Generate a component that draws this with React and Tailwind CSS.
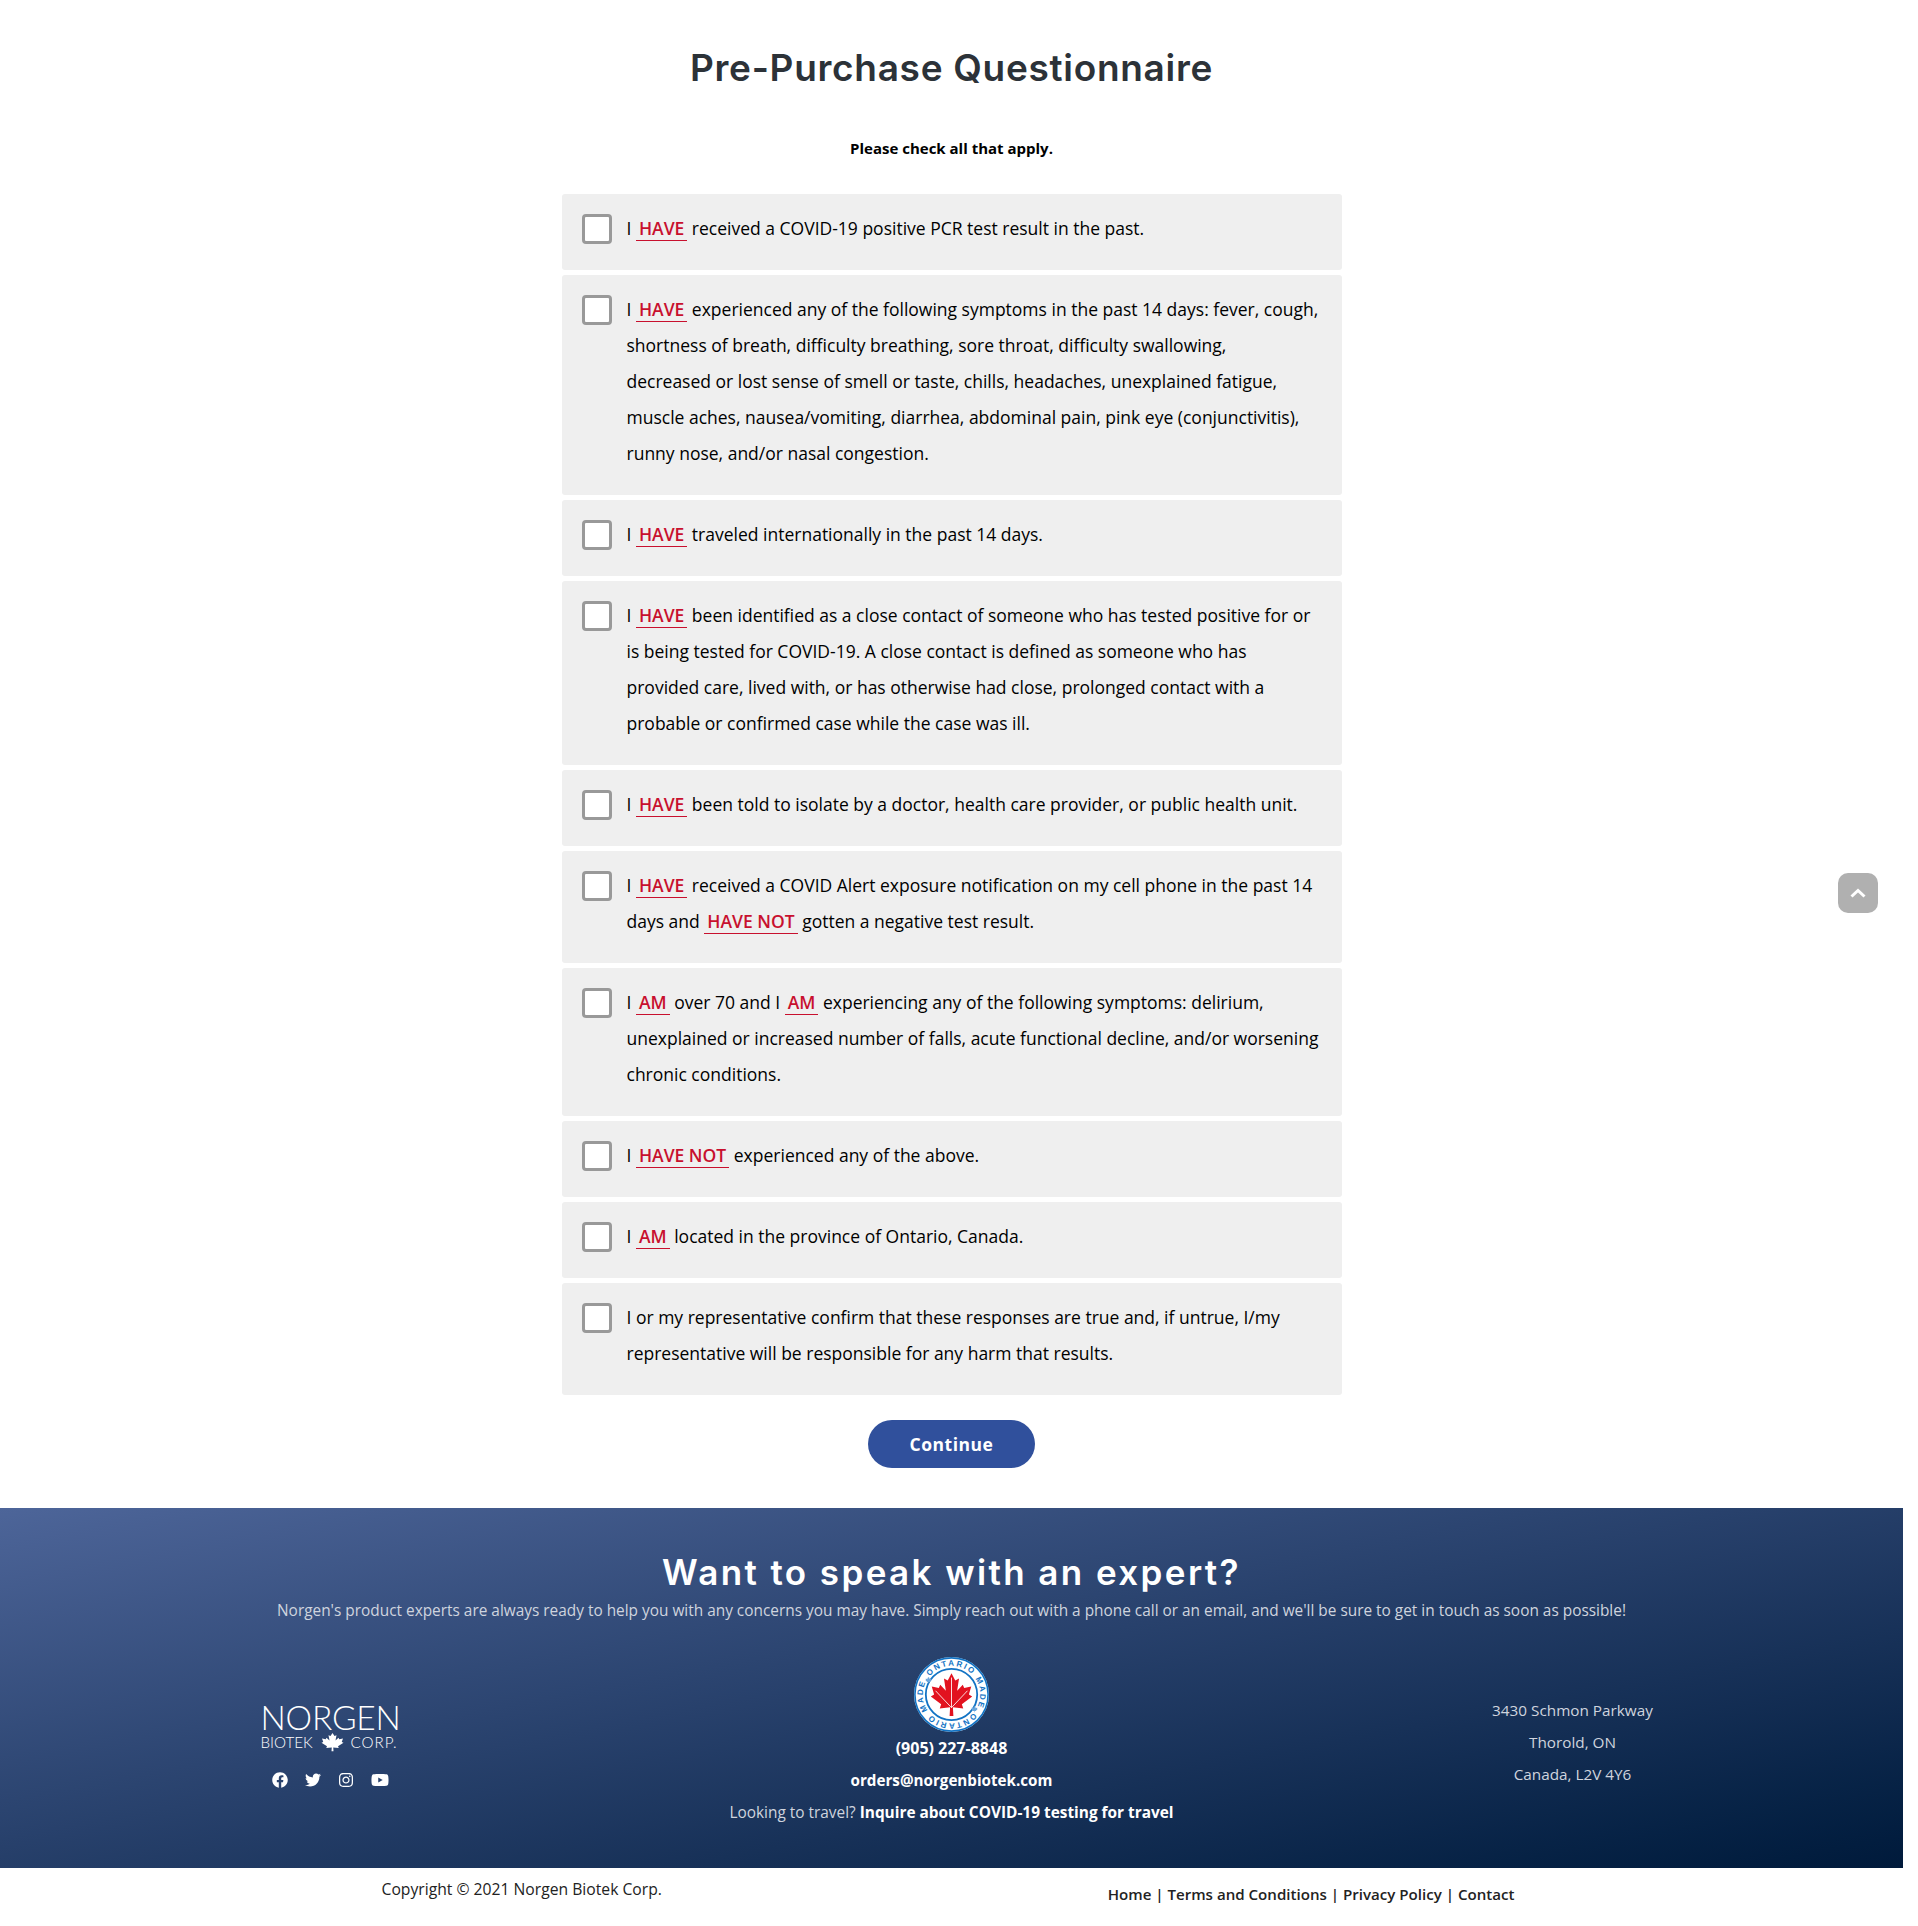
import { FaFacebook, FaTwitter, FaInstagram, FaYoutube } from 'react-icons/fa';

const leafPoints =
  '50,5 58,20 66,16 62,42 74,29 77,36 92,33 87,50 94,54 72,71 75,80 53,77 54,96 46,96 47,77 25,80 28,71 6,54 13,50 8,33 23,36 26,29 38,42 34,16 42,20';

function Key({ children }) {
  return (
    <span className="inline-block border-b border-[#c8102e] px-[3px] leading-[24px] font-semibold text-[#c8102e]">
      {children}
    </span>
  );
}

const questions = [
  [<>I <Key>HAVE</Key> received a COVID-19 positive PCR test result in the past.</>],
  [
    <>I <Key>HAVE</Key> experienced any of the following symptoms in the past 14 days: fever, cough,</>,
    'shortness of breath, difficulty breathing, sore throat, difficulty swallowing,',
    'decreased or lost sense of smell or taste, chills, headaches, unexplained fatigue,',
    'muscle aches, nausea/vomiting, diarrhea, abdominal pain, pink eye (conjunctivitis),',
    'runny nose, and/or nasal congestion.',
  ],
  [<>I <Key>HAVE</Key> traveled internationally in the past 14 days.</>],
  [
    <>I <Key>HAVE</Key> been identified as a close contact of someone who has tested positive for or</>,
    'is being tested for COVID-19. A close contact is defined as someone who has',
    'provided care, lived with, or has otherwise had close, prolonged contact with a',
    'probable or confirmed case while the case was ill.',
  ],
  [<>I <Key>HAVE</Key> been told to isolate by a doctor, health care provider, or public health unit.</>],
  [
    <>I <Key>HAVE</Key> received a COVID Alert exposure notification on my cell phone in the past 14</>,
    <>days and <Key>HAVE NOT</Key> gotten a negative test result.</>,
  ],
  [
    <>I <Key>AM</Key> over 70 and I <Key>AM</Key> experiencing any of the following symptoms: delirium,</>,
    'unexplained or increased number of falls, acute functional decline, and/or worsening',
    'chronic conditions.',
  ],
  [<>I <Key>HAVE NOT</Key> experienced any of the above.</>],
  [<>I <Key>AM</Key> located in the province of Ontario, Canada.</>],
  [
    'I or my representative confirm that these responses are true and, if untrue, I/my',
    'representative will be responsible for any harm that results.',
  ],
];

function MapleLeaf({ className }) {
  return (
    <svg viewBox="0 0 100 100" className={className} fill="currentColor" preserveAspectRatio="none">
      <polygon points={leafPoints} />
    </svg>
  );
}

function RingText() {
  return (
    <text fontFamily="Liberation Sans, sans-serif" fontSize="8" fontWeight="700" fill="#1273c4">
      <textPath href="#badgeRing" textLength="82" lengthAdjust="spacing">ONTARIO MADE</textPath>
    </text>
  );
}

function OntarioBadge() {
  return (
    <svg viewBox="0 0 75 75" className="h-[75px] w-[75px]">
      <defs>
        <path id="badgeRing" d="M15.67 19.18 A28.5 28.5 0 1 1 59.33 55.82 A28.5 28.5 0 1 1 15.67 19.18" />
      </defs>
      <circle cx="37.5" cy="37.5" r="37.5" fill="#fff" />
      <circle cx="37.5" cy="37.5" r="36.6" fill="none" stroke="#1273c4" strokeWidth="1.6" />
      <circle cx="37.5" cy="37.5" r="25.7" fill="none" stroke="#1273c4" strokeWidth="1.8" />
      <RingText />
      <g transform="rotate(180 37.5 37.5)">
        <RingText />
      </g>
      <g transform="translate(57 48.5) scale(0.07)" fill="#6aa6dc">
        <polygon points={leafPoints} />
      </g>
      <g transform="translate(11 19.5) scale(0.07)" fill="#6aa6dc">
        <polygon points={leafPoints} />
      </g>
      <g transform="translate(14 14) scale(0.47)">
        <polygon points={leafPoints} fill="#e2121f" />
        <path d="M50 78V14M50 78 16 42M50 78 84 42" stroke="#fff" strokeWidth="1.8" fill="none" />
      </g>
    </svg>
  );
}

export default function App() {
  return (
    <div className='relative w-[1903px] bg-white font-["Open_Sans",sans-serif]'>
      <main className="flex flex-col items-center">
        <h1 className='mt-[44px] font-["Inter",sans-serif] text-[37px] leading-[48px] font-semibold tracking-[0.7px] text-[#2c3238]'>
          Pre-Purchase Questionnaire
        </h1>
        <p className="mt-[44px] text-[15px] leading-[24px] font-bold text-black">Please check all that apply.</p>
        <div className="mt-[34px] flex w-[780px] flex-col gap-[5px]">
          {questions.map((lines, i) => (
            <label key={i} className="flex gap-[15px] rounded-[3px] bg-[#efefef] px-[20px] pt-[20px] pb-[24px]">
              <span className="h-[30px] w-[30px] shrink-0 rounded-[4px] border-[3px] border-[#999] bg-white" />
              <span className="-mt-[4px] text-[17.5px] leading-[36px] text-black">
                {lines.map((line, j) => (
                  <span key={j} className="block whitespace-nowrap">{line}</span>
                ))}
              </span>
            </label>
          ))}
        </div>
        <button className="mt-[25px] mb-[40px] h-[48px] w-[167px] rounded-full bg-[#30509c] text-[17.5px] font-bold tracking-[0.5px] text-white">
          Continue
        </button>
      </main>

      <footer className="h-[360px] bg-linear-to-br from-[#4d6599] to-[#001a3b] pt-[42px] text-center">
        <h2 className='font-["Inter",sans-serif] text-[35px] leading-[44px] font-semibold tracking-[2.4px] text-white'>
          Want to speak with an expert?
        </h2>
        <p className="mt-[4px] text-[15.4px] leading-[26px] text-[#cfd4de]">
          Norgen's product experts are always ready to help you with any concerns you may have. Simply reach out with a phone call or an email, and we'll be sure to get in touch as soon as possible!
        </p>
        <div className="mt-[32px] grid grid-cols-3 px-[20px]">
          <div className="flex flex-col items-center pt-[45px]">
            <div className='mr-[3px] w-[137px] font-["Lato",sans-serif] font-light text-white'>
              <div className="text-[33.5px] leading-[32px] tracking-[-0.2px]">NORGEN</div>
              <div className="-mt-[1px] flex items-center justify-between text-[15.2px] leading-[18px]">
                <span>BIOTEK</span>
                <MapleLeaf className="ml-[2px] h-[20px] w-[25px]" />
                <span className="tracking-[1px]">CORP.</span>
              </div>
            </div>
            <div className="mt-[19px] flex items-center gap-[17px] text-[16px] text-white">
              <FaFacebook />
              <FaTwitter />
              <FaInstagram />
              <FaYoutube className="text-[18px]" />
            </div>
          </div>
          <div className="flex flex-col items-center pt-[1px]">
            <OntarioBadge />
            <div className="text-[16px] leading-[32px] font-bold text-white">(905) 227-8848</div>
            <div className="text-[15.2px] leading-[32px] font-bold text-white">orders@norgenbiotek.com</div>
            <div className="text-[15.4px] leading-[34px] text-[#cfd4de]">
              Looking to travel? <span className="font-bold text-white">Inquire about COVID-19 testing for travel</span>
            </div>
          </div>
          <div className="pt-[38px] text-[15.3px] leading-[32px] text-[#cfd4de]">
            <div>3430 Schmon Parkway</div>
            <div>Thorold, ON</div>
            <div>Canada, L2V 4Y6</div>
          </div>
        </div>
      </footer>

      <div className="mx-auto flex h-[58px] w-[1170px] justify-between px-[15px] text-[#222]">
        <span className="pt-[9px] text-[15.7px] leading-[24px]">Copyright © 2021 Norgen Biotek Corp.</span>
        <span className="mr-[7px] pt-[14px] text-[15.1px] leading-[24px] font-semibold">Home | Terms and Conditions | Privacy Policy | Contact</span>
      </div>

      <button className="absolute top-[873px] right-[25px] flex h-[40px] w-[40px] items-center justify-center rounded-[10px] bg-[#b0b0b0]">
        <svg viewBox="0 0 16 16" className="h-[16px] w-[16px]" fill="none" stroke="#fff" strokeWidth="3">
          <path d="M1.5 11.5 8 5.5l6.5 6" />
        </svg>
      </button>
    </div>
  );
}
